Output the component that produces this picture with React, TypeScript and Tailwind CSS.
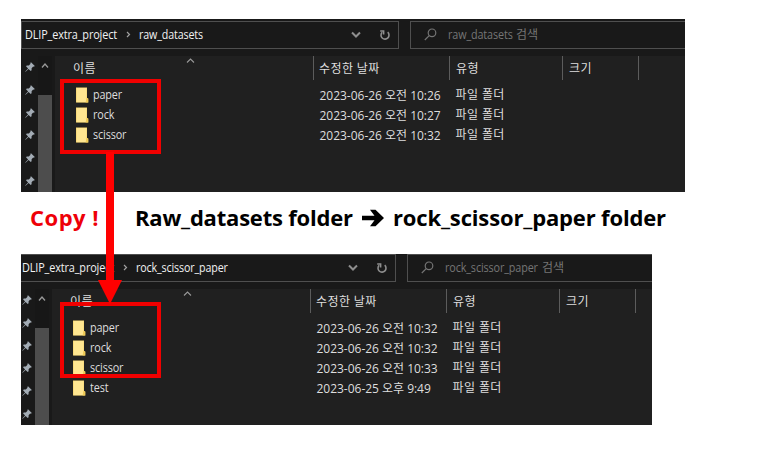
type Entry = { name: string; date: string };

const UI_FONT = "font-['Open_Sans','Noto_Sans_CJK_KR',sans-serif]";

function Pin() {
  return (
    <svg width="10" height="10" viewBox="0 0 10 10" className="block shrink-0 fill-[#a3acb5]">
      <path d="M6 0.2 9.8 4 8.9 4.7 8.2 4.5 6.6 6.2 6.6 8.2 5.7 9 3.6 6.9 0.6 9.8 0.2 9.4 3.1 6.4 1 4.3 1.8 3.4 3.8 3.4 5.5 1.8 5.3 1.1Z" />
    </svg>
  );
}

function Folder() {
  return (
    <svg width="13" height="16" viewBox="0 0 13 16" className="block shrink-0">
      <path d="M0 0.5h11v10.5l1.3 1v3.5H0z" fill="#f5d36c" />
      <path d="M0.6 1h10v14.2h-10z" fill="#ffe691" />
      <path d="M10.4 11.2 12.2 11v4.4h-2.6z" fill="#f0cb57" />
    </svg>
  );
}

function Chevron({ d, w, h, color, sw }: { d: string; w: number; h: number; color: string; sw: number }) {
  return (
    <svg width={w} height={h} viewBox={`0 0 ${w} ${h}`} className="block shrink-0" fill="none" stroke={color} strokeWidth={sw}>
      <path d={d} />
    </svg>
  );
}

function AddressBar({ folder, labelWidth }: { folder: string; labelWidth: string }) {
  return (
    <div className="flex h-[37px] w-[690px] shrink-0 bg-[#191919] pt-[2px]">
      <div className="flex h-[28px] w-[378px] items-center border border-[#4f4f4f] pb-[1px] pl-[3px] text-[12px] text-[#f2f2f2]">
        <span className="w-[93px] shrink-0 origin-left scale-x-[0.905] whitespace-nowrap tracking-[-0.14px]">DLIP_extra_project</span>
        <span className="flex w-[21px] shrink-0 justify-center">
          <Chevron d="M1 1 3.5 3.5 1 6" w={5} h={7} color="#a0a0a0" sw={1.2} />
        </span>
        <span className="grow origin-left scale-x-[0.89] whitespace-nowrap tracking-[-0.14px]">{folder}</span>
        <Chevron d="M1 1.5 5 5.5 9 1.5" w={10} h={8} color="#8e8e8e" sw={2} />
        <svg width="12" height="12" viewBox="0 0 12 12" className="mr-[7px] ml-[18px] block shrink-0" fill="none" stroke="#8e8e8e" strokeWidth="1.6">
          <path d="M8.7 3.2A4 4 0 1 1 3.2 3.3" />
          <path d="M1.2 2H4.6V5.6" />
        </svg>
      </div>
      <div className="ml-[11px] flex h-[28px] grow items-center border border-[#4f4f4f] pb-[1px] pl-[13px] text-[12px] text-[#757575]">
        <svg width="13" height="13" viewBox="0 0 13 13" className="block shrink-0" fill="none" stroke="#757575" strokeWidth="1.2">
          <circle cx="8" cy="4.8" r="3.8" />
          <path d="M5.2 7.6 0.8 12" />
        </svg>
        <span className={`ml-[11px] shrink-0 origin-left scale-x-[0.9] whitespace-nowrap tracking-[-0.14px] ${labelWidth}`}>{folder}</span>
        <span className="shrink-0 whitespace-nowrap">검색</span>
      </div>
    </div>
  );
}

function Explorer({ folder, labelWidth, entries }: { folder: string; labelWidth: string; entries: Entry[] }) {
  return (
    <div className="flex h-[176px] w-[690px] flex-col bg-[#202020]">
      <AddressBar folder={folder} labelWidth={labelWidth} />
      <div className="flex min-h-0 grow">
        <div className="flex w-[34px] shrink-0 bg-[#191919]">
          <div className="flex w-[17px] flex-col items-center gap-[12.8px] pt-[6px]">
            {[0, 1, 2, 3, 4, 5].map((i) => (
              <Pin key={i} />
            ))}
          </div>
          <div className="flex w-[14px] flex-col items-center bg-[#171717] pt-[6px]">
            <Chevron d="M1 5.5 4 2 7 5.5" w={8} h={7} color="#999999" sw={1.3} />
            <div className="mt-[26px] w-[14px] grow bg-[#4d4d4d]" />
          </div>
        </div>
        <div className="grow text-[12px] text-[#dedede]">
          <div className="flex h-[24px] tracking-[0.4px]">
            <div className="flex w-[259px] items-center border-r border-[#5c5c5c] pl-[18px]">
              <span className="w-[113px] pt-px">이름</span>
              <div className="mb-[16px]">
                <Chevron d="M1 4.5 4.5 1 8 4.5" w={9} h={5} color="#999999" sw={1.1} />
              </div>
            </div>
            <div className="flex w-[136px] items-center border-r border-[#5c5c5c] pt-px pl-[5px]">수정한 날짜</div>
            <div className="flex w-[113px] items-center border-r border-[#5c5c5c] pt-px pl-[6px]">유형</div>
            <div className="flex w-[76px] items-center border-r border-[#5c5c5c] pt-px pl-[6px]">크기</div>
          </div>
          <div className="pt-[5px]">
            {entries.map((e) => (
              <div key={e.name} className="flex h-[20px] items-center whitespace-nowrap">
                <div className="flex w-[264.500px] shrink-0 items-center pl-[21px]">
                  <Folder />
                  <span className="ml-[4px] origin-left scale-x-[0.9] tracking-[-0.14px]">{e.name}</span>
                </div>
                <span className="w-[136px] shrink-0 pt-px tracking-[-0.02px]">{e.date}</span>
                <span className="tracking-[0.4px]">파일 폴더</span>
              </div>
            ))}
          </div>
        </div>
      </div>
    </div>
  );
}

export default function App() {
  return (
    <div className={`relative h-[453px] w-[759px] overflow-hidden bg-white pt-[19px] pl-[21px] ${UI_FONT}`}>
      <div className="h-[173px] w-[664px] overflow-hidden">
        <Explorer
          folder="raw_datasets"
          labelWidth="w-[68px]"
          entries={[
            { name: "paper", date: "2023-06-26 오전 10:26" },
            { name: "rock", date: "2023-06-26 오전 10:27" },
            { name: "scissor", date: "2023-06-26 오전 10:32" },
          ]}
        />
      </div>
      <div className="flex h-[62px] items-center pb-[12px] pl-[9px] text-[22px] font-bold whitespace-nowrap text-black">
        <span className="w-[105px] shrink-0 tracking-[0.5px] text-[#ee0008]">Copy !</span>
        <span className="w-[227px] shrink-0 tracking-[-0.2px]">Raw_datasets folder</span>
        <svg width="22" height="18" viewBox="0 0 22 18" className="mt-[2px] mr-[9px] block shrink-0">
          <path d="M0 6.800h12.500L8 0.800h5.500L22 9l-8.500 8.200H8l4.500-6H0z" />
        </svg>
        <span className="tracking-[-0.15px]">rock_scissor_paper folder</span>
      </div>
      <div className="h-[171px] w-[631px] overflow-hidden">
        <div className="-mt-[2px] -ml-[3px]">
          <Explorer
            folder="rock_scissor_paper"
            labelWidth="w-[97px]"
            entries={[
              { name: "paper", date: "2023-06-26 오전 10:32" },
              { name: "rock", date: "2023-06-26 오전 10:32" },
              { name: "scissor", date: "2023-06-26 오전 10:33" },
              { name: "test", date: "2023-06-25 오후 9:49" },
            ]}
          />
        </div>
      </div>
      <div className="absolute top-[79px] left-[60px] h-[75px] w-[101px] border-4 border-[#f00000]" />
      <div className="absolute top-[302px] left-[60px] h-[76px] w-[101px] border-4 border-[#f00000]" />
      <svg width="24" height="152" viewBox="0 0 24 152" className="absolute top-[152px] left-[98px]">
        <path d="M8 0h8v128h8L12 152 0 128h8z" fill="#ff0000" />
      </svg>
    </div>
  );
}
